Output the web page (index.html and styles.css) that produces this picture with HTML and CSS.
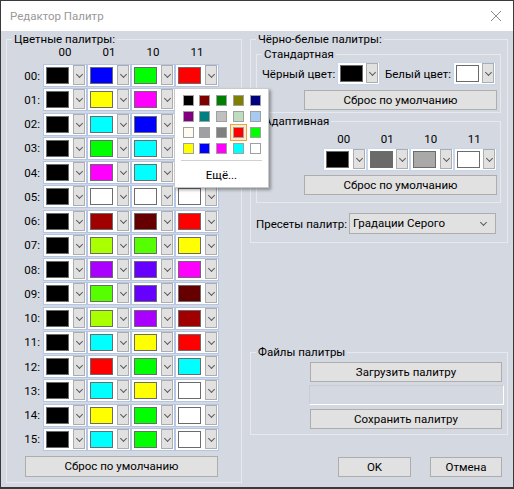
FILE: index.html
```html
<!DOCTYPE html>
<html lang="ru">
<head>
<meta charset="utf-8">
<title>Редактор Палитр</title>
<link rel="stylesheet" href="styles.css">
</head>
<body>
<div class="window">
  <div class="titlebar">
    <span class="title">Редактор Палитр</span>
    <svg class="close" width="12" height="12" viewBox="0 0 12 12"><path d="M1 1 L11 11 M11 1 L1 11" stroke="#8a8a8a" stroke-width="1" fill="none"/></svg>
  </div>
  <div class="client">
    <fieldset class="group colors">
      <legend>Цветные палитры:</legend>
      <div class="heads"><span>00</span><span>01</span><span>10</span><span>11</span></div>
      <div class="rows">
        <div class="prow"><span class="lbl">00:</span><div class="cell"><i class="sw" style="background:#000000"></i><b class="dd"></b></div><div class="cell"><i class="sw" style="background:#0000ff"></i><b class="dd"></b></div><div class="cell"><i class="sw" style="background:#00ff00"></i><b class="dd"></b></div><div class="cell"><i class="sw" style="background:#ff0000"></i><b class="dd"></b></div></div>
        <div class="prow"><span class="lbl">01:</span><div class="cell"><i class="sw" style="background:#000000"></i><b class="dd"></b></div><div class="cell"><i class="sw" style="background:#ffff00"></i><b class="dd"></b></div><div class="cell"><i class="sw" style="background:#ff00ff"></i><b class="dd"></b></div><div class="cell"><i class="sw" style="background:#ffffff"></i><b class="dd"></b></div></div>
        <div class="prow"><span class="lbl">02:</span><div class="cell"><i class="sw" style="background:#000000"></i><b class="dd"></b></div><div class="cell"><i class="sw" style="background:#00ffff"></i><b class="dd"></b></div><div class="cell"><i class="sw" style="background:#0000ff"></i><b class="dd"></b></div><div class="cell"><i class="sw" style="background:#ffffff"></i><b class="dd"></b></div></div>
        <div class="prow"><span class="lbl">03:</span><div class="cell"><i class="sw" style="background:#000000"></i><b class="dd"></b></div><div class="cell"><i class="sw" style="background:#00ff00"></i><b class="dd"></b></div><div class="cell"><i class="sw" style="background:#00ffff"></i><b class="dd"></b></div><div class="cell"><i class="sw" style="background:#ffffff"></i><b class="dd"></b></div></div>
        <div class="prow"><span class="lbl">04:</span><div class="cell"><i class="sw" style="background:#000000"></i><b class="dd"></b></div><div class="cell"><i class="sw" style="background:#ff00ff"></i><b class="dd"></b></div><div class="cell"><i class="sw" style="background:#00ffff"></i><b class="dd"></b></div><div class="cell"><i class="sw" style="background:#ffffff"></i><b class="dd"></b></div></div>
        <div class="prow"><span class="lbl">05:</span><div class="cell"><i class="sw" style="background:#000000"></i><b class="dd"></b></div><div class="cell"><i class="sw" style="background:#ffffff"></i><b class="dd"></b></div><div class="cell"><i class="sw" style="background:#ffffff"></i><b class="dd"></b></div><div class="cell"><i class="sw" style="background:#ffffff"></i><b class="dd"></b></div></div>
        <div class="prow"><span class="lbl">06:</span><div class="cell"><i class="sw" style="background:#000000"></i><b class="dd"></b></div><div class="cell"><i class="sw" style="background:#a00000"></i><b class="dd"></b></div><div class="cell"><i class="sw" style="background:#660000"></i><b class="dd"></b></div><div class="cell"><i class="sw" style="background:#ff0000"></i><b class="dd"></b></div></div>
        <div class="prow"><span class="lbl">07:</span><div class="cell"><i class="sw" style="background:#000000"></i><b class="dd"></b></div><div class="cell"><i class="sw" style="background:#aaff00"></i><b class="dd"></b></div><div class="cell"><i class="sw" style="background:#55ff00"></i><b class="dd"></b></div><div class="cell"><i class="sw" style="background:#ffff00"></i><b class="dd"></b></div></div>
        <div class="prow"><span class="lbl">08:</span><div class="cell"><i class="sw" style="background:#000000"></i><b class="dd"></b></div><div class="cell"><i class="sw" style="background:#aa00ff"></i><b class="dd"></b></div><div class="cell"><i class="sw" style="background:#6600ff"></i><b class="dd"></b></div><div class="cell"><i class="sw" style="background:#ff00ff"></i><b class="dd"></b></div></div>
        <div class="prow"><span class="lbl">09:</span><div class="cell"><i class="sw" style="background:#000000"></i><b class="dd"></b></div><div class="cell"><i class="sw" style="background:#55ff00"></i><b class="dd"></b></div><div class="cell"><i class="sw" style="background:#6600ff"></i><b class="dd"></b></div><div class="cell"><i class="sw" style="background:#660000"></i><b class="dd"></b></div></div>
        <div class="prow"><span class="lbl">10:</span><div class="cell"><i class="sw" style="background:#000000"></i><b class="dd"></b></div><div class="cell"><i class="sw" style="background:#aaff00"></i><b class="dd"></b></div><div class="cell"><i class="sw" style="background:#aa00ff"></i><b class="dd"></b></div><div class="cell"><i class="sw" style="background:#a00000"></i><b class="dd"></b></div></div>
        <div class="prow"><span class="lbl">11:</span><div class="cell"><i class="sw" style="background:#000000"></i><b class="dd"></b></div><div class="cell"><i class="sw" style="background:#00ffff"></i><b class="dd"></b></div><div class="cell"><i class="sw" style="background:#ffff00"></i><b class="dd"></b></div><div class="cell"><i class="sw" style="background:#ff0000"></i><b class="dd"></b></div></div>
        <div class="prow"><span class="lbl">12:</span><div class="cell"><i class="sw" style="background:#000000"></i><b class="dd"></b></div><div class="cell"><i class="sw" style="background:#ff0000"></i><b class="dd"></b></div><div class="cell"><i class="sw" style="background:#00ff00"></i><b class="dd"></b></div><div class="cell"><i class="sw" style="background:#00ffff"></i><b class="dd"></b></div></div>
        <div class="prow"><span class="lbl">13:</span><div class="cell"><i class="sw" style="background:#000000"></i><b class="dd"></b></div><div class="cell"><i class="sw" style="background:#00ffff"></i><b class="dd"></b></div><div class="cell"><i class="sw" style="background:#ffff00"></i><b class="dd"></b></div><div class="cell"><i class="sw" style="background:#ffffff"></i><b class="dd"></b></div></div>
        <div class="prow"><span class="lbl">14:</span><div class="cell"><i class="sw" style="background:#000000"></i><b class="dd"></b></div><div class="cell"><i class="sw" style="background:#ffff00"></i><b class="dd"></b></div><div class="cell"><i class="sw" style="background:#00ff00"></i><b class="dd"></b></div><div class="cell"><i class="sw" style="background:#ffffff"></i><b class="dd"></b></div></div>
        <div class="prow"><span class="lbl">15:</span><div class="cell"><i class="sw" style="background:#000000"></i><b class="dd"></b></div><div class="cell"><i class="sw" style="background:#00ffff"></i><b class="dd"></b></div><div class="cell"><i class="sw" style="background:#00ff00"></i><b class="dd"></b></div><div class="cell"><i class="sw" style="background:#ffffff"></i><b class="dd"></b></div></div>
      </div>
      <button class="btn reset-left">Сброс по умолчанию</button>
    </fieldset>

    <div class="right">
      <fieldset class="group bw">
        <legend>Чёрно-белые палитры:</legend>
        <fieldset class="group std">
          <legend>Стандартная</legend>
          <div class="std-row">
            <span class="std-lbl">Чёрный цвет:</span>
            <div class="cell small light"><i class="sw" style="background:#000000"></i><b class="dd"></b></div>
            <span class="std-lbl2">Белый цвет:</span>
            <div class="cell small light"><i class="sw" style="background:#ffffff"></i><b class="dd"></b></div>
          </div>
          <button class="btn reset-right">Сброс по умолчанию</button>
        </fieldset>
        <fieldset class="group adapt">
          <legend>Адаптивная</legend>
          <div class="aheads"><span>00</span><span>01</span><span>10</span><span>11</span></div>
          <div class="arow">
            <div class="cell light"><i class="sw" style="background:#000000"></i><b class="dd"></b></div>
            <div class="cell small light"><i class="sw" style="background:#6a6a6a"></i><b class="dd"></b></div>
            <div class="cell light"><i class="sw" style="background:#a9a9a9"></i><b class="dd"></b></div>
            <div class="cell small light"><i class="sw" style="background:#ffffff"></i><b class="dd"></b></div>
          </div>
          <button class="btn reset-right adapt-btn">Сброс по умолчанию</button>
        </fieldset>
        <div class="presets">
          <span class="plbl">Пресеты палитр:</span>
          <div class="combo">Градации Серого</div>
        </div>
      </fieldset>

      <fieldset class="group files">
        <legend>Файлы палитры</legend>
        <button class="btn fbtn load">Загрузить палитру</button>
        <div class="path"></div>
        <button class="btn fbtn">Сохранить палитру</button>
      </fieldset>

      <div class="dlg">
        <button class="btn ok">OK</button>
        <button class="btn cancel">Отмена</button>
      </div>
    </div>
  </div>

  <div class="popup">
    <div class="pgrid">
      <i class="ps" style="background:#000000"></i><i class="ps" style="background:#800000"></i><i class="ps" style="background:#008000"></i><i class="ps" style="background:#808000"></i><i class="ps" style="background:#000080"></i>
      <i class="ps" style="background:#800080"></i><i class="ps" style="background:#008080"></i><i class="ps" style="background:#c0c0c0"></i><i class="ps" style="background:#c0dcc0"></i><i class="ps" style="background:#a6caf0"></i>
      <i class="ps" style="background:#fffbf0"></i><i class="ps" style="background:#a0a0a4"></i><i class="ps" style="background:#808080"></i><i class="ps sel" style="background:#ff0000"></i><i class="ps" style="background:#00ff00"></i>
      <i class="ps" style="background:#ffff00"></i><i class="ps" style="background:#0000ff"></i><i class="ps" style="background:#ff00ff"></i><i class="ps" style="background:#00ffff"></i><i class="ps" style="background:#ffffff"></i>
    </div>
    <div class="psep"></div>
    <div class="more">Ещё...</div>
  </div>
</div>
</body>
</html>
```

FILE: styles.css
```css
* { box-sizing: border-box; }
html, body { margin: 0; padding: 0; background: #ffffff; }
body {
  font-family: Roboto, "Noto Sans", sans-serif;
  font-size: 11.5px;
  line-height: 16px;
  color: #000;
  white-space: nowrap;
}
.window {
  position: relative;
  width: 514px;
  height: 489px;
  border: 1px solid #3a3a3a;
  border-bottom-width: 2px;
  background: #d4d8e0;
  display: flex;
  flex-direction: column;
  overflow: hidden;
}
.titlebar {
  height: 30px;
  background: #ffffff;
  display: flex;
  align-items: center;
  padding: 0 10px 0 9px;
  flex: none;
}
.title { color: #999999; flex: 1; }
.close { display: block; margin-right: 1px; }

.client {
  display: flex;
  align-items: flex-start;
  gap: 8px;
  padding: 2px 0 0 5px;
  flex: none;
}

.group {
  margin: 0;
  padding: 0;
  min-width: 0;
  border: 1px solid #e7e9ee;
  flex: none;
}
.group > legend {
  padding: 0 2px;
  margin-left: 5px;
  line-height: 13px;
}

/* left */
.colors {
  width: 236px;
  padding-bottom: 5px;
  display: flex;
  flex-direction: column;
}
.heads {
  display: flex;
  padding-left: 36px;
  line-height: 12px;
}
.heads span { width: 44px; text-align: center; }
.rows {
  display: flex;
  flex-direction: column;
  gap: 1.27px;
  margin-top: 6px;
}
.prow { display: flex; align-items: center; height: 23px; }
.lbl { width: 33px; text-align: right; margin-right: 3px; }

.cell {
  width: 44px;
  height: 23px;
  border: 1px solid #b4c6e4;
  background: #ffffff;
  display: flex;
  padding: 2px 1px 0 2px;
  flex: none;
}
.cell.small { width: 43px; }
.cell.light { border-color: #c8d6ec; }
.sw {
  display: block;
  width: 23px;
  height: 17px;
  border: 1px solid #6b6b6b;
}
.dd {
  display: block;
  position: relative;
  margin-left: auto;
  margin-top: -2px;
  width: 12px;
  height: 20px;
  border: 1px solid #adadad;
  background: #e1e1e1;
}
.dd::after, .combo::after {
  content: "";
  position: absolute;
  left: 3px;
  top: 6px;
  width: 4px;
  height: 4px;
  border-right: 1px solid #5a5a5a;
  border-bottom: 1px solid #5a5a5a;
  transform: rotate(45deg);
}

.btn {
  font: inherit;
  color: #000;
  background: #e1e1e1;
  border: 1px solid #adadad;
  padding: 0;
  height: 21px;
  line-height: 18px;
  display: block;
  flex: none;
}
.reset-left { width: 193px; margin: 5px 0 0 18px; }

/* right */
.right { width: 258px; display: flex; flex-direction: column; }
.bw { padding: 0 0 8px 0; }
.std { margin: 2px 6px 0 5px; padding: 0 0 2px 0; }
.std-row {
  display: flex;
  align-items: center;
  margin-top: 1px;
  padding-left: 5px;
}
.std-lbl { width: 75px; }
.std-lbl2 { width: 68px; margin-left: 5px; }
.reset-right { width: 193px; margin: 5px 0 0 47px; height: 20px; }
.adapt { margin: 2px 6px 0 5px; padding-bottom: 7px; }
.aheads { display: flex; margin-top: 5px; padding-left: 65px; line-height: 12px; }
.aheads span { width: 43.5px; text-align: center; }
.arow { display: flex; margin: 3px 0 0 66px; }
.reset-right.adapt-btn { margin-top: 4px; }

.presets {
  display: flex;
  align-items: center;
  margin: 10px 0 0 5px;
}
.plbl { width: 93px; }
.combo {
  position: relative;
  width: 147px;
  height: 21px;
  border: 1px solid #adadad;
  background: #e1e1e1;
  padding-left: 3px;
  line-height: 19px;
}
.combo::after { left: auto; right: 9px; top: 6px; }

.files {
  margin-top: 103px;
  padding: 0 0 5px 0;
}
.fbtn { width: 192px; height: 20px; margin-left: 59px; }
.fbtn.load { margin-top: 3px; }
.path {
  width: 195px;
  height: 20px;
  margin: 3px 0 4px 58px;
  border: 1px solid #ffffff;
  border-top-color: #c8ccd4;
  border-left-color: #c8ccd4;
}

.dlg {
  display: flex;
  margin-top: 22px;
  padding-left: 88px;
  gap: 19px;
}
.ok { width: 73px; height: 20px; }
.cancel { width: 72px; height: 20px; }

/* popup */
.popup {
  position: absolute;
  left: 173px;
  top: 87px;
  width: 95px;
  height: 100px;
  background: #ffffff;
  border: 1px solid #c9c9c9;
  box-shadow: 2px 2px 3px rgba(0,0,0,0.35);
  padding: 6px 0 0 7.7px;
}
.pgrid {
  display: grid;
  grid-template-columns: repeat(5, 11px);
  column-gap: 5.75px;
  row-gap: 5px;
}
.ps {
  display: block;
  width: 11px;
  height: 11px;
  border: 1px solid #a0a0a0;
}
.ps.sel {
  outline: 1px solid #f2a23a;
  outline-offset: 2px;
  box-shadow: 0 0 0 2px #fde9cc;
}
.psep {
  height: 1px;
  background: #d0d0d0;
  margin: 6px 6px 0 -2px;
}
.more {
  text-align: center;
  margin: 6px 0 0 -7.7px;
}
```
